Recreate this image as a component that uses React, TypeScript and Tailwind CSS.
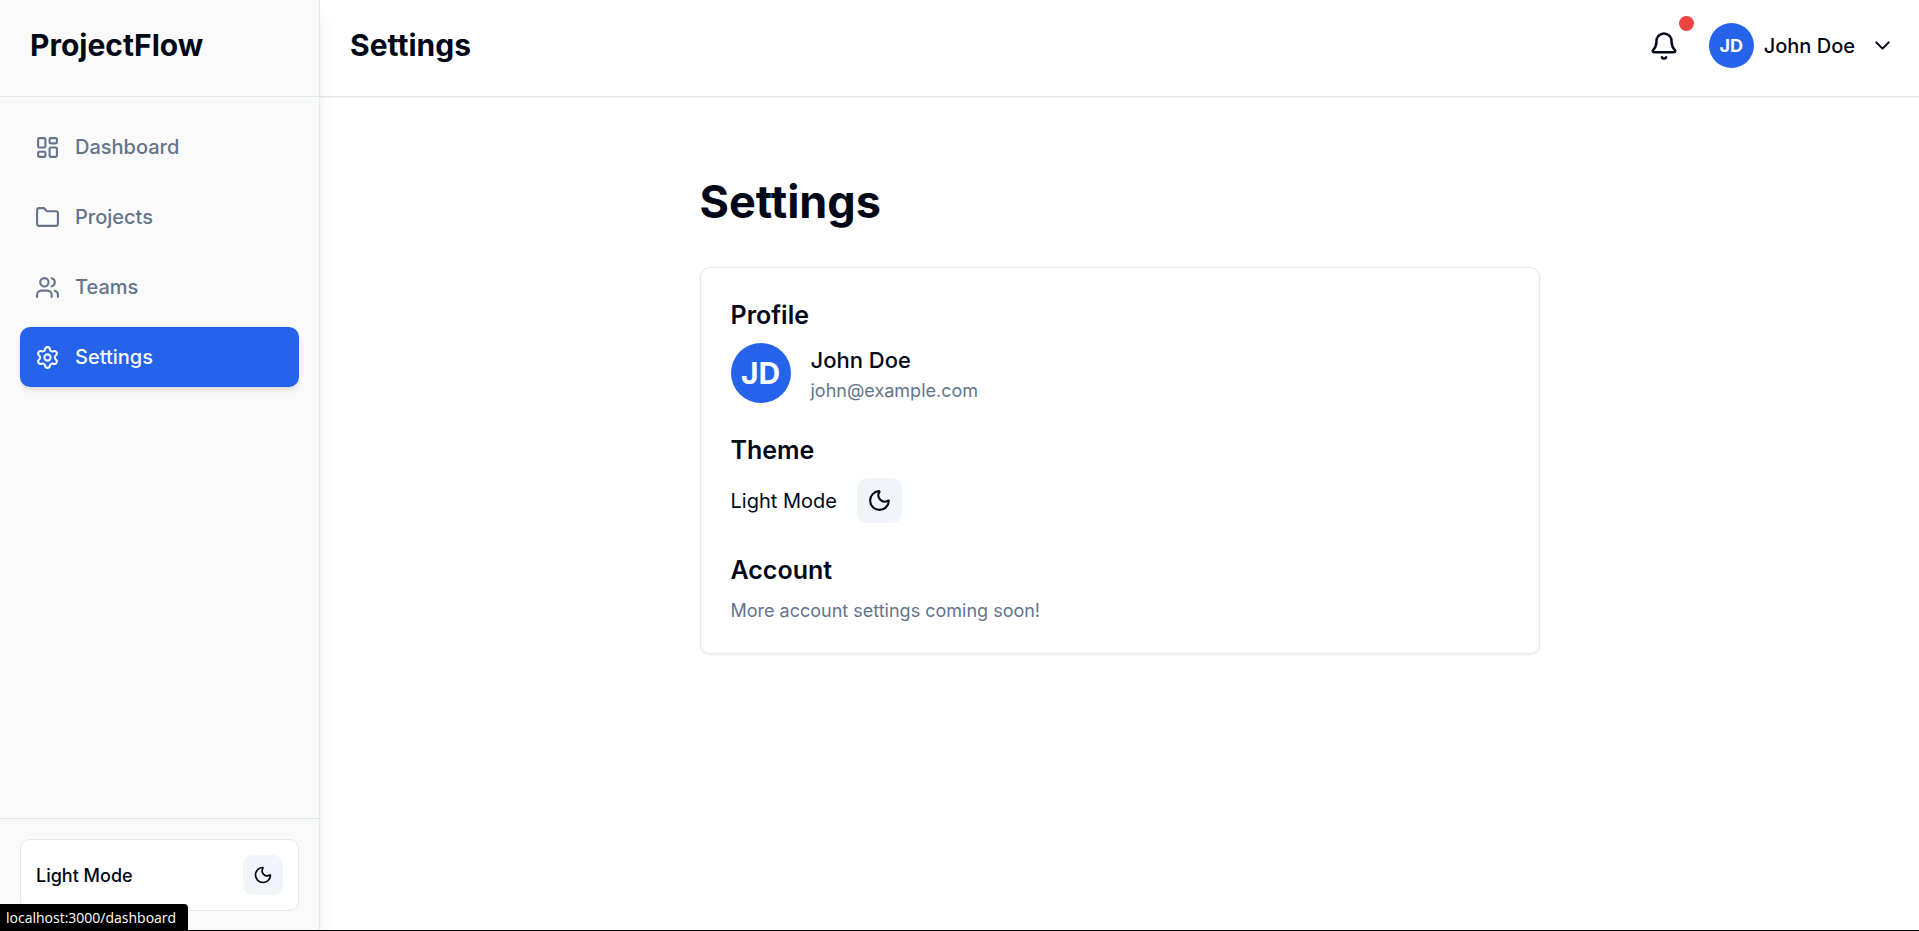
import { useState } from "react";
import { Bell, ChevronDown, Folder, LayoutDashboard, Moon, Settings, Users } from "lucide-react";

const navItems = [
  { label: "Dashboard", icon: LayoutDashboard },
  { label: "Projects", icon: Folder },
  { label: "Teams", icon: Users },
  { label: "Settings", icon: Settings },
];

export default function App() {
  const [active, setActive] = useState("Settings");

  return (
    <div className="flex min-h-screen bg-white font-['Inter',sans-serif] text-[20px] leading-[30px] text-[#020817]">
      <aside className="z-10 flex w-80 shrink-0 flex-col border-r border-[#e2e8f0] bg-[#fafafa] shadow-[0_12px_19px_-4px_rgba(0,0,0,0.1),0_5px_8px_-5px_rgba(0,0,0,0.1)]">
        <div className="border-b border-[#e2e8f0] px-[30px] pt-[23px] pb-7">
          <p className="text-[30px] leading-[45px] font-bold">ProjectFlow</p>
        </div>
        <nav aria-label="Main" className="flex flex-1 flex-col gap-2.5 p-5">
          {navItems.map(({ label, icon: Icon }) => (
            <a
              key={label}
              href={`#${label.toLowerCase()}`}
              onClick={() => setActive(label)}
              aria-current={active === label ? "page" : undefined}
              className={
                active === label
                  ? "flex items-center gap-[15px] rounded-[10px] bg-[#2563eb] p-[15px] font-medium text-[#f8fafc] shadow-md"
                  : "flex items-center gap-[15px] rounded-[10px] p-[15px] font-medium text-[#64748b]"
              }
            >
              <Icon size={25} aria-hidden />
              <span>{label}</span>
            </a>
          ))}
        </nav>
        <div className="border-t border-[#e2e8f0] p-5">
          <div className="flex items-center justify-between rounded-[10px] border border-[#e2e8f0] bg-white p-[15px]">
            <span className="text-[18px] leading-[25px] font-medium">Light Mode</span>
            <button type="button" aria-label="Toggle theme" className="rounded-[10px] bg-[#f1f5f9] p-2.5">
              <Moon size={20} aria-hidden />
            </button>
          </div>
        </div>
      </aside>

      <div className="flex min-w-0 flex-1 flex-col">
        <header className="flex items-center justify-between border-b border-[#e2e8f0] bg-white px-[30px] pt-[23px] pb-7 shadow-xs">
          <h1 className="text-[30px] leading-[45px] font-bold">Settings</h1>
          <div className="flex items-center gap-[30px]">
            <button type="button" aria-label="Notifications" className="relative">
              <Bell size={30} aria-hidden />
              <span className="absolute -top-[15px] -right-[15px] size-[15px] rounded-full bg-[#ef4444]" />
            </button>
            <button type="button" className="-mr-1.5 flex items-center gap-2.5 font-medium">
              <span className="flex size-[45px] items-center justify-center rounded-full bg-[#2563eb] text-[18px] font-bold text-[#f8fafc]">
                JD
              </span>
              <span>John Doe</span>
              <ChevronDown size={25} aria-hidden className="ml-[5px]" />
            </button>
          </div>
        </header>

        <main className="flex-1 px-[30px] py-20">
          <div className="mx-auto max-w-[840px]">
            <h2 className="mb-10 text-[45px] leading-[50px] font-bold">Settings</h2>
            <div className="flex flex-col gap-[30px] rounded-[10px] border border-[#e2e8f0] bg-white p-[30px] shadow-[0_1px_3px_rgba(0,0,0,0.08)]">
              <section>
                <h3 className="mb-2.5 text-[25px] leading-[35px] font-semibold">Profile</h3>
                <div className="flex items-center gap-5">
                  <div className="flex size-[60px] items-center justify-center rounded-full bg-[#2563eb] text-[30px] font-bold text-[#f8fafc]">
                    JD
                  </div>
                  <div>
                    <p className="text-[22px] leading-[35px] font-medium">John Doe</p>
                    <p className="text-[18px] leading-[25px] text-[#64748b]">john@example.com</p>
                  </div>
                </div>
              </section>
              <section>
                <h3 className="mb-2.5 text-[25px] leading-[35px] font-semibold">Theme</h3>
                <div className="flex items-center gap-5">
                  <span>Light Mode</span>
                  <button type="button" aria-label="Toggle theme" className="rounded-[10px] bg-[#f1f5f9] p-2.5">
                    <Moon size={25} aria-hidden />
                  </button>
                </div>
              </section>
              <section>
                <h3 className="mb-2.5 text-[25px] leading-[35px] font-semibold">Account</h3>
                <p className="text-[18px] leading-[25px] text-[#64748b]">More account settings coming soon!</p>
              </section>
            </div>
          </div>
        </main>
      </div>

      <div className="fixed inset-x-0 bottom-0 z-20 border-b border-black">
        <p className="w-fit rounded-tr-[4px] bg-black pt-px pr-3 pl-1.5 font-['Open_Sans',sans-serif] text-[14px] leading-[25px] text-white">
          localhost:3000/dashboard
        </p>
      </div>
    </div>
  );
}
